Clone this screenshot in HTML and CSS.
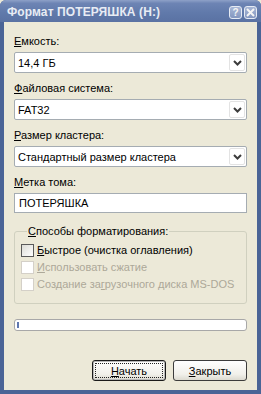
FILE: index.html
```html
<!DOCTYPE html>
<html lang="ru">
<head>
  <meta charset="UTF-8">
  <title>Формат ПОТЕРЯШКА (H:)</title>
  <link rel="stylesheet" href="styles.css">
</head>
<body>
  <div class="window">
    <div class="titlebar">
      <span class="title">Формат ПОТЕРЯШКА (H:)</span>
      <div class="caption-buttons">
        <span class="cap-btn">?</span>
        <span class="cap-btn">
          <svg width="9" height="9" viewBox="0 0 9 9"><path d="M1 1L8 8M8 1L1 8" stroke="#f4f4f4" stroke-width="2" fill="none"/></svg>
        </span>
      </div>
    </div>
    <div class="client">
      <div class="field">
        <div class="label"><u>Е</u>мкость:</div>
        <div class="combo">
          <span class="combo-text">14,4 ГБ</span>
          <span class="combo-btn"><svg width="9" height="6" viewBox="0 0 9 6"><path d="M1 1L4.5 4.5L8 1" stroke="#3c3c3c" stroke-width="2" fill="none"/></svg></span>
        </div>
      </div>
      <div class="field">
        <div class="label"><u>Ф</u>айловая система:</div>
        <div class="combo">
          <span class="combo-text">FAT32</span>
          <span class="combo-btn"><svg width="9" height="6" viewBox="0 0 9 6"><path d="M1 1L4.5 4.5L8 1" stroke="#3c3c3c" stroke-width="2" fill="none"/></svg></span>
        </div>
      </div>
      <div class="field">
        <div class="label"><u>Р</u>азмер кластера:</div>
        <div class="combo">
          <span class="combo-text">Стандартный размер кластера</span>
          <span class="combo-btn"><svg width="9" height="6" viewBox="0 0 9 6"><path d="M1 1L4.5 4.5L8 1" stroke="#3c3c3c" stroke-width="2" fill="none"/></svg></span>
        </div>
      </div>
      <div class="field">
        <div class="label"><u>М</u>етка тома:</div>
        <div class="textbox">ПОТЕРЯШКА</div>
      </div>
      <fieldset class="group">
        <legend><u>С</u>пособы форматирования:</legend>
        <div class="check"><span class="box"></span><span><u>Б</u>ыстрое (очистка оглавления)</span></div>
        <div class="check disabled"><span class="box"></span><span><u>И</u>спользовать сжатие</span></div>
        <div class="check disabled"><span class="box"></span><span>Создание за<u>г</u>рузочного диска MS-DOS</span></div>
      </fieldset>
      <div class="progress"><span class="progress-fill"></span></div>
      <div class="actions">
        <button class="btn btn-default"><span class="focus"><u>Н</u>ачать</span></button>
        <button class="btn"><span class="focus"><u>З</u>акрыть</span></button>
      </div>
    </div>
  </div>
</body>
</html>
```

FILE: styles.css
```css
* {
  margin: 0;
  padding: 0;
  box-sizing: border-box;
}
body {
  width: 261px;
  height: 394px;
  overflow: hidden;
  background: #ece9d8;
  font-family: 'Liberation Sans', Arial, sans-serif;
  font-size: 11px;
  color: #000;
}
.window {
  width: 261px;
  height: 394px;
  display: flex;
  flex-direction: column;
  background: #4a6496;
  border-radius: 6px 6px 0 0;
}
.titlebar {
  height: 22px;
  display: flex;
  align-items: center;
  justify-content: space-between;
  padding: 2px 4px 0 7px;
  background: linear-gradient(to bottom, #8ea1c8 0%, #6d84b4 15%, #6079aa 60%, #5a72a3 100%);
  border-radius: 6px 6px 0 0;
}
.title {
  color: #e8ecf4;
  font-weight: bold;
  font-size: 12px;
  letter-spacing: 0.1px;
}
.caption-buttons {
  display: flex;
  gap: 2px;
}
.cap-btn {
  width: 13px;
  height: 13px;
  border: 1px solid #e6ebf4;
  border-radius: 3px;
  background: linear-gradient(to bottom, #a8b7d6, #8497c0);
  color: #f4f4f4;
  font-weight: bold;
  font-size: 10px;
  display: flex;
  align-items: center;
  justify-content: center;
}
.client {
  flex: 1;
  margin: 0 4px 4px 4px;
  background: #ece9d8;
  padding: 13px 10px 9px 10px;
  display: flex;
  flex-direction: column;
}
.field {
  margin-bottom: 9px;
}
.label {
  height: 13px;
  line-height: 13px;
  margin-bottom: 4px;
}
.combo {
  height: 21px;
  background: #fff;
  border: 1px solid #a5acb2;
  border-radius: 2px;
  display: flex;
  align-items: center;
  justify-content: space-between;
  padding: 1px 1px 1px 3px;
}
.combo-btn {
  width: 16px;
  height: 17px;
  border: 1px solid #e3e3e3;
  border-radius: 2px;
  background: #fff;
  display: flex;
  align-items: center;
  justify-content: center;
}
.textbox {
  height: 20px;
  background: #fff;
  border: 1px solid #a5acb2;
  padding: 0 4px;
  line-height: 18px;
}
.group {
  border: 1px solid #d0d0bf;
  border-radius: 3px;
  padding: 3px 6px 11px 6px;
  margin-top: 3px;
}
.group legend {
  padding: 0 1px;
  margin-left: 6px;
  line-height: 13px;
}
.check {
  display: flex;
  align-items: center;
  gap: 3px;
  height: 16px;
  margin-top: 1px;
}
.check .box {
  width: 13px;
  height: 13px;
  border: 1px solid #5a5a5a;
  background: linear-gradient(135deg, #dcdcd6, #fff);
}
.check.disabled {
  color: #aca899;
}
.check.disabled .box {
  border-color: #d4d0c8;
  background: #fff;
}
.progress {
  margin-top: 15px;
  height: 12px;
  background: #fff;
  border: 1px solid #a8a8a8;
  border-radius: 3px;
  padding: 2px;
}
.progress-fill {
  display: block;
  width: 2px;
  height: 6px;
  background: #6078b0;
}
.actions {
  margin-top: auto;
  display: flex;
  justify-content: flex-end;
  gap: 7px;
}
.btn {
  width: 74px;
  height: 21px;
  font-family: inherit;
  font-size: 11px;
  background: linear-gradient(to bottom, #fff 0%, #f1f0ea 70%, #dcdad0 100%);
  border: 1px solid #3c3c3c;
  border-radius: 3px;
  padding: 2px;
  color: #000;
}
.btn .focus {
  display: flex;
  align-items: center;
  justify-content: center;
  height: 100%;
  border: 1px dotted transparent;
}
.btn-default {
  border-color: #1a1a1a;
  box-shadow: inset 0 0 0 1px #b8b8b8;
}
.btn-default .focus {
  border-color: #222;
}
```
